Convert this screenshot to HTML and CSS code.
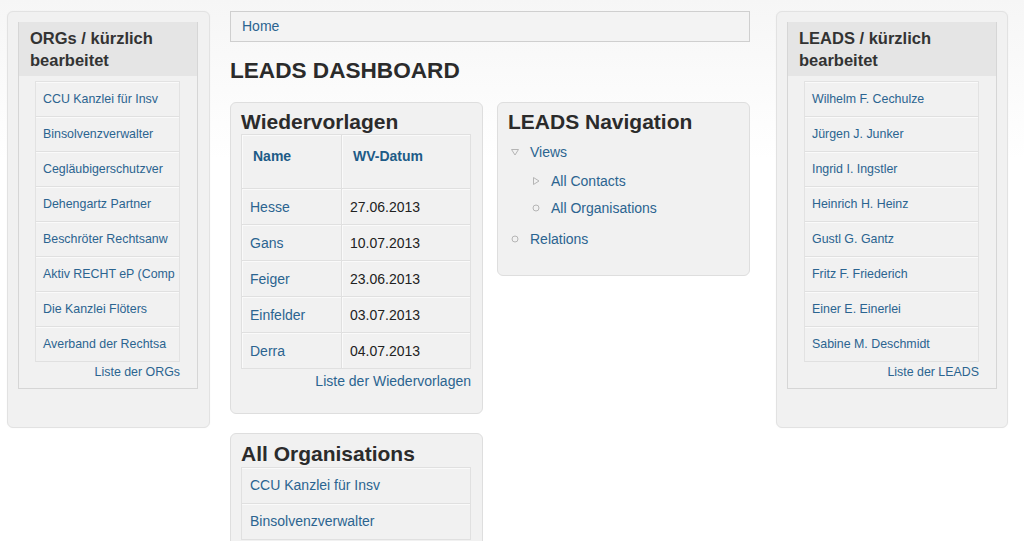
FILE: index.html
```html
<!DOCTYPE html>
<html lang="de">
<head>
<meta charset="utf-8">
<title>LEADS DASHBOARD</title>
<link rel="stylesheet" href="styles.css">
</head>
<body>
<div class="page">
  <aside class="side side-left">
    <div class="side-panel">
      <h2 class="side-title">ORGs / kürzlich bearbeitet</h2>
      <ul class="side-list">
        <li><a href="#">CCU Kanzlei für Insv</a></li>
        <li><a href="#">Binsolvenzverwalter</a></li>
        <li><a href="#">Cegläubigerschutzver</a></li>
        <li><a href="#">Dehengartz Partner</a></li>
        <li><a href="#">Beschröter Rechtsanw</a></li>
        <li><a href="#">Aktiv RECHT eP (Comp</a></li>
        <li><a href="#">Die Kanzlei Flöters</a></li>
        <li><a href="#">Averband der Rechtsa</a></li>
      </ul>
      <div class="side-more"><a href="#">Liste der ORGs</a></div>
    </div>
  </aside>

  <main class="main">
    <div class="breadcrumb"><a href="#">Home</a></div>
    <h1 class="page-title">LEADS DASHBOARD</h1>
    <div class="grid">
      <section class="box">
        <h2 class="box-title">Wiedervorlagen</h2>
        <table class="wv">
          <thead>
            <tr><th class="c1">Name</th><th class="c2">WV-Datum</th></tr>
          </thead>
          <tbody>
            <tr><td><a href="#">Hesse</a></td><td>27.06.2013</td></tr>
            <tr><td><a href="#">Gans</a></td><td>10.07.2013</td></tr>
            <tr><td><a href="#">Feiger</a></td><td>23.06.2013</td></tr>
            <tr><td><a href="#">Einfelder</a></td><td>03.07.2013</td></tr>
            <tr><td><a href="#">Derra</a></td><td>04.07.2013</td></tr>
          </tbody>
        </table>
        <div class="box-more"><a href="#">Liste der Wiedervorlagen</a></div>
      </section>

      <section class="box box-nav">
        <h2 class="box-title">LEADS Navigation</h2>
        <ul class="tree">
          <li class="tree-item">
            <span class="tree-row">
              <svg class="ico" viewBox="0 0 10 10" width="10" height="10"><path d="M1.5 2.5 H8.5 L5 8 Z" fill="none" stroke="#b5b5b5" stroke-width="1"/></svg>
              <a href="#">Views</a>
            </span>
            <ul class="tree sub">
              <li class="tree-item">
                <span class="tree-row">
                  <svg class="ico" viewBox="0 0 10 10" width="10" height="10"><path d="M2.5 1.5 V8.5 L8 5 Z" fill="none" stroke="#b5b5b5" stroke-width="1"/></svg>
                  <a href="#">All Contacts</a>
                </span>
              </li>
              <li class="tree-item">
                <span class="tree-row">
                  <svg class="ico" viewBox="0 0 10 10" width="10" height="10"><circle cx="5" cy="5" r="3" fill="none" stroke="#b5b5b5" stroke-width="1"/></svg>
                  <a href="#">All Organisations</a>
                </span>
              </li>
            </ul>
          </li>
          <li class="tree-item last">
            <span class="tree-row">
              <svg class="ico" viewBox="0 0 10 10" width="10" height="10"><circle cx="5" cy="5" r="3" fill="none" stroke="#b5b5b5" stroke-width="1"/></svg>
              <a href="#">Relations</a>
            </span>
          </li>
        </ul>
      </section>

      <section class="box box-orgs">
        <h2 class="box-title">All Organisations</h2>
        <ul class="org-list">
          <li><a href="#">CCU Kanzlei für Insv</a></li>
          <li><a href="#">Binsolvenzverwalter</a></li>
        </ul>
      </section>
    </div>
  </main>

  <aside class="side side-right">
    <div class="side-panel">
      <h2 class="side-title">LEADS / kürzlich bearbeitet</h2>
      <ul class="side-list">
        <li><a href="#">Wilhelm F. Cechulze</a></li>
        <li><a href="#">Jürgen J. Junker</a></li>
        <li><a href="#">Ingrid I. Ingstler</a></li>
        <li><a href="#">Heinrich H. Heinz</a></li>
        <li><a href="#">Gustl G. Gantz</a></li>
        <li><a href="#">Fritz F. Friederich</a></li>
        <li><a href="#">Einer E. Einerlei</a></li>
        <li><a href="#">Sabine M. Deschmidt</a></li>
      </ul>
      <div class="side-more"><a href="#">Liste der LEADS</a></div>
    </div>
  </aside>
</div>
</body>
</html>
```

FILE: styles.css
```css
* { box-sizing: border-box; }

html, body {
  margin: 0;
  padding: 0;
}

body {
  font-family: "Liberation Sans", Arial, sans-serif;
  color: #333;
  background: linear-gradient(180deg, #f6f6f6 0, #ffffff 160px);
  height: 541px;
  overflow: hidden;
}

a {
  color: #2b6490;
  text-decoration: none;
}

ul {
  list-style: none;
  margin: 0;
  padding: 0;
}

.page {
  display: flex;
  align-items: flex-start;
  padding: 11px 0 0 7px;
}

/* ---------- sidebars ---------- */
.side {
  background: #f1f1f1;
  border: 1px solid #e2e2e2;
  border-radius: 6px;
  padding: 10px 11px 38px 10px;
  box-shadow: 0 0 2px rgba(0,0,0,0.04);
}

.side-left { width: 203px; }

.side-right {
  width: 232px;
  margin-left: 26px;
  padding-right: 10px;
}

.side-panel {
  border: 1px solid #d6d6d6;
  border-top: none;
  background: #f1f1f1;
  padding-bottom: 7px;
}

.side-title {
  margin: 0;
  background: #e5e5e5;
  font-size: 16.5px;
  line-height: 22px;
  font-weight: bold;
  color: #333;
  padding: 5px 10px 5px 11px;
}

.side-list {
  margin: 5px 17px 0 16px;
  border-top: 1px solid #e2e2e2;
}

.side-list li {
  height: 35px;
  line-height: 34px;
  font-size: 12.4px;
  padding-left: 7px;
  border-left: 1px solid #e2e2e2;
  border-right: 1px solid #e2e2e2;
  border-bottom: 1px solid #e0e0e0;
  box-shadow: inset 0 1px 0 #fafafa;
  background: #f1f1f1;
  white-space: nowrap;
  overflow: hidden;
}

.side-more {
  text-align: right;
  margin: 1px 17px 0 16px;
  font-size: 12.4px;
  line-height: 18px;
}

/* ---------- main ---------- */
.main {
  width: 520px;
  margin-left: 20px;
}

.breadcrumb {
  height: 31px;
  line-height: 29px;
  background: #f3f3f3;
  border: 1px solid #cfcfcf;
  padding-left: 11px;
  font-size: 14px;
}

.page-title {
  margin: 16px 0 18px;
  font-size: 22.6px;
  line-height: 26px;
  font-weight: bold;
  color: #2b2b2b;
}

.grid {
  display: grid;
  grid-template-columns: 253px 253px;
  column-gap: 14px;
  row-gap: 19px;
  align-items: start;
}

.box {
  background: #f1f1f1;
  border: 1px solid #dedede;
  border-radius: 6px;
  padding: 6px 11px 23px 10px;
}

.box-title {
  margin: 0;
  font-size: 21px;
  line-height: 25px;
  font-weight: bold;
  color: #2b2b2b;
}

/* table */
.wv {
  width: 230px;
  border-collapse: collapse;
  font-size: 14px;
  margin-top: 0;
}

.wv th,
.wv td {
  border: 1px solid #e0e0e0;
  box-shadow: inset 1px 1px 0 #fafafa;
  text-align: left;
}

.wv th {
  height: 54px;
  vertical-align: top;
  padding: 13px 0 0 11px;
  line-height: 16px;
  color: #1d5b87;
  font-weight: bold;
}

.wv th.c1 { width: 100px; }

.wv td {
  height: 36px;
  padding: 0 0 0 8px;
  line-height: 16px;
  color: #222;
}

.box-more {
  text-align: right;
  font-size: 14px;
  line-height: 18px;
  margin-top: 3px;
}

/* navigation tree */
.box-nav {
  padding-bottom: 24px;
}

.tree {
  font-size: 14px;
  margin-top: 6px;
}

.tree.sub {
  margin: 5px 0 0 21px;
}

.tree-row {
  display: flex;
  align-items: center;
  height: 24px;
  line-height: 24px;
}

.tree-item { margin-bottom: 3px; }
.tree.sub .tree-item { margin-bottom: 3px; }
.tree-item.last { margin-top: 7px; margin-bottom: 0; }

.ico {
  flex: none;
  margin: 0 10px 0 2px;
}

/* all organisations list */
.box-orgs {
  padding-top: 7px;
  padding-bottom: 40px;
}

.org-list {
  width: 230px;
  margin-top: 1px;
  border-top: 1px solid #e0e0e0;
}

.org-list li {
  height: 36px;
  line-height: 35px;
  font-size: 14px;
  padding-left: 8px;
  border-left: 1px solid #e0e0e0;
  border-right: 1px solid #e0e0e0;
  border-bottom: 1px solid #e0e0e0;
  box-shadow: inset 0 1px 0 #fafafa;
}
```
